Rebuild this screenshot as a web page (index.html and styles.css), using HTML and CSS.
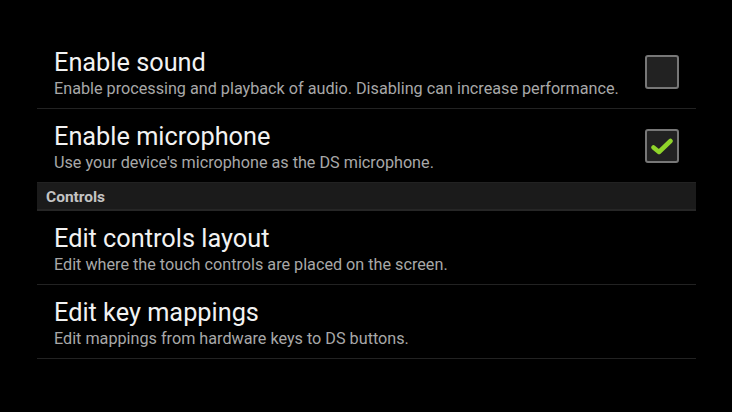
FILE: index.html
```html
<!DOCTYPE html>
<html lang="en">
<head>
    <meta charset="UTF-8">
    <meta name="viewport" content="width=device-width, initial-scale=1.0">
    <title>Settings</title>
    <link rel="stylesheet" href="styles.css">
</head>
<body>
    <div class="prefs">
        <div class="pref">
            <div class="pref-text">
                <div class="pref-title">Enable sound</div>
                <div class="pref-summary">Enable processing and playback of audio. Disabling can increase performance.</div>
            </div>
            <div class="checkbox"></div>
        </div>
        <div class="pref">
            <div class="pref-text">
                <div class="pref-title">Enable microphone</div>
                <div class="pref-summary">Use your device's microphone as the DS microphone.</div>
            </div>
            <div class="checkbox checked">
                <svg width="22" height="18" viewBox="0 0 22 18">
                    <path d="M2.5 10.5 L8 15 L19.5 4" fill="none" stroke="#8fd42a" stroke-width="4.5" stroke-linecap="round" stroke-linejoin="round"/>
                </svg>
            </div>
        </div>
        <div class="category">Controls</div>
        <div class="pref">
            <div class="pref-text">
                <div class="pref-title">Edit controls layout</div>
                <div class="pref-summary">Edit where the touch controls are placed on the screen.</div>
            </div>
        </div>
        <div class="pref">
            <div class="pref-text">
                <div class="pref-title">Edit key mappings</div>
                <div class="pref-summary">Edit mappings from hardware keys to DS buttons.</div>
            </div>
        </div>
    </div>
</body>
</html>
```

FILE: styles.css
```css
body {
    margin: 0;
    background-color: #000;
    font-family: Roboto, "Noto Sans", sans-serif;
}

.prefs {
    margin: 35px 36px 0 37px;
}

.pref {
    display: flex;
    align-items: center;
    height: 73px;
    padding-left: 17px;
    padding-right: 17px;
    border-bottom: 1px solid #222;
}

.pref-text {
    flex: 1;
    align-self: flex-start;
    padding-top: 14px;
}

.pref-title {
    color: #f2f2f2;
    font-size: 25.3px;
    line-height: 27px;
}

.pref-summary {
    color: #a8a8a8;
    font-size: 16.2px;
    line-height: 26px;
}

.checkbox {
    width: 30px;
    height: 30px;
    border: 2px solid #777;
    border-radius: 3px;
    background-color: #222;
    display: flex;
    align-items: center;
    justify-content: center;
}

.category {
    height: 25px;
    padding-top: 1px;
    padding-left: 9px;
    line-height: 26px;
    background-color: #1b1b1b;
    border-bottom: 2px solid #262626;
    color: #c4c4c4;
    font-size: 15.5px;
    font-weight: bold;
}
```
